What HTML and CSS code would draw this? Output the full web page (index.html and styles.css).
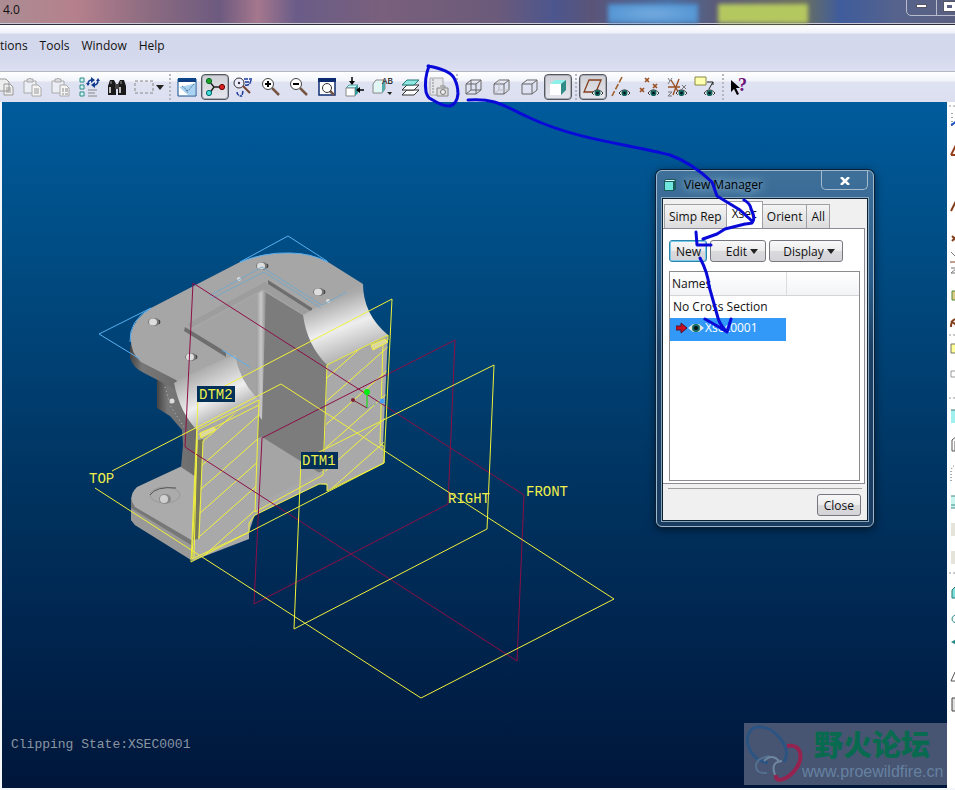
FILE: index.html
```
<!DOCTYPE html>
<html lang="en">
<head>
  <meta charset="UTF-8">
  <meta name="viewport" content="width=device-width, initial-scale=1.0">
  <title>View Manager</title>
  <link rel="stylesheet" href="styles.css">
</head>
<body>
  <!-- shared icon parts -->
  <svg class="defs" width="0" height="0" aria-hidden="true">
    <symbol id="eye" viewBox="0 0 12 8">
      <path d="M0 4Q6-3 12 4Q6 10 0 4z" fill="#fff"/>
      <path d="M0 4Q6-3 12 4M0 4l2 2M12 4l-2 2" fill="none" stroke="#222"/>
      <circle cx="6" cy="4" r="3.4" fill="#17695f"/><circle cx="6" cy="4" r="1.5" fill="#012"/>
    </symbol>
    <symbol id="paste" viewBox="0 0 20 20">
      <path d="M1 4h12v12H1z" fill="#eceef5" stroke="#aaa"/><path d="M4 5V2h2l1-1 1 1h2v3z" fill="#ddd" stroke="#aaa"/>
      <path d="M9 8h6l3 3v8H9z" fill="#f5f5f5" stroke="#aaa"/>
    </symbol>
    <symbol id="cube" viewBox="0 0 20 20">
      <path d="M2 7h10v10H2zM2 7l5-4h10l-5 4M17 3v10l-5 4" fill="none" stroke="#666"/>
    </symbol>
  </svg>

  <header class="titlebar">
    <span class="title">4.0</span>
    <div class="glow blue"></div>
    <div class="glow green"></div>
    <div class="win-buttons">
      <button aria-label="Minimize"><i class="min"></i></button>
      <button aria-label="Maximize"><i class="max"></i></button>
    </div>
  </header>

  <nav class="menubar">
    <a href="#">tions</a>
    <a href="#">Tools</a>
    <a href="#">Window</a>
    <a href="#">Help</a>
  </nav>

  <div class="toolbar">
    <button aria-label="Copy"><svg viewBox="0 0 20 20"><path d="M4 2h7l3 3v9H4zM9 7h6l3 3v8H9z" fill="#eee" stroke="#999"/><path d="M11 11h5M11 13h5M11 15h5" stroke="#999"/></svg></button>
    <button aria-label="Paste"><svg viewBox="0 0 20 20"><use href="#paste"/><path d="M11 12h5M11 14h5M11 16h5" stroke="#999"/></svg></button>
    <button aria-label="Paste special"><svg viewBox="0 0 20 20"><use href="#paste"/><path d="M11 12h2M14 12h3M11 14h2M14 14h3M11 17h2M14 17h3" stroke="#888"/></svg></button>
    <button aria-label="Regenerate"><svg viewBox="0 0 20 20"><path d="M1 1h4v4H1zM1 8h4v4H1zM1 15h4v4H1z" fill="#d5f5f2" stroke="#2a8a88"/><path d="M9 13h9M9 16h7M9 19h9" stroke="#888"/><path d="M9 7q0-4 4-4M19 3q0 5-4 5" fill="none" stroke="#123a8c" stroke-width="1.5"/><path d="M12 0l4 3-4 3zM16 5v6l-4-3zM7 6h4l-2 3zM17 4h4l-2-3z" fill="#123a8c"/></svg></button>
    <button aria-label="Find"><svg viewBox="0 0 20 20"><path d="M3 3h4l2 4v11H1V9zM13 3h4l2 6v9h-8V7z" fill="#1a1a1a"/><path d="M8 7h4v5H8z" fill="#444"/><path d="M3 10v6M13 10v6" stroke="#bbb" stroke-width="2"/><path d="M4 4v3M14 4v3" stroke="#999"/></svg></button>
    <button class="wide" aria-label="Select"><svg viewBox="0 0 20 20"><path d="M1 4h18v12H1z" fill="none" stroke="#888" stroke-dasharray="3 2"/></svg><i class="caret"></i></button>
    <i class="sep"></i>
    <button aria-label="Repaint"><svg viewBox="0 0 20 20"><path d="M1 2h18v17H1z" fill="#fff"/><path d="M2 10l9 8h7V6l-6 2z" fill="#a9d3f2"/><path d="M1 1h18v4H1z" fill="#0d3c80"/><path d="M1 2h18v17H1z" fill="none" stroke="#0d4c90"/><path d="M5 9l6 5 6-7M9 13l2 3" fill="none" stroke="#579" stroke-dasharray="2 1"/></svg></button>
    <button class="pressed" aria-label="Spin center"><svg viewBox="0 0 20 20"><path d="M4 4l5 6h9M9 10l-5 7" fill="none" stroke="#222" stroke-width="1.4"/><circle cx="4" cy="4" r="2.6" fill="#1ea51e" stroke="#063"/><circle cx="17" cy="10" r="2.6" fill="#d22" stroke="#600"/><circle cx="4" cy="16" r="2.6" fill="#4dd" stroke="#066"/></svg></button>
    <button aria-label="Orient mode"><svg viewBox="0 0 20 20"><circle cx="6" cy="6" r="5" fill="#eef" stroke="#333"/><circle cx="6" cy="6" r="1.2" fill="#333"/><path d="M10 9l7 7" stroke="#743" stroke-width="2"/><path d="M11 2h8M12 5h5M12 8q5 1 6-5M4 15q0 4 5 4M10 14l-1 5" fill="none" stroke="#1a3a9c" stroke-dasharray="4 1" stroke-width="1.5"/></svg></button>
    <button aria-label="Zoom in"><svg viewBox="0 0 20 20"><path d="M11 11l7 7" stroke="#754" stroke-width="2.5"/><circle cx="7" cy="7" r="5.5" fill="#fff" stroke="#444"/><path d="M4 7h6M7 4v6" stroke="#000" stroke-width="2"/></svg></button>
    <button aria-label="Zoom out"><svg viewBox="0 0 20 20"><path d="M11 11l7 7" stroke="#754" stroke-width="2.5"/><circle cx="7" cy="7" r="5.5" fill="#fff" stroke="#444"/><path d="M4 7h6" stroke="#000" stroke-width="2"/></svg></button>
    <button aria-label="Refit"><svg viewBox="0 0 20 20"><path d="M2 2h16v16H2z" fill="#fff" stroke="#0d2c70" stroke-width="1.5"/><path d="M1 1h18v4H1z" fill="#0d2c70"/><path d="M12 13l5 5" stroke="#754" stroke-width="2.5"/><circle cx="10" cy="11" r="4.5" fill="#fff" stroke="#333"/></svg></button>
    <button aria-label="Reorient"><svg viewBox="0 0 20 20"><path d="M1 11l3-3h9l-3 3z" fill="#bff" stroke="#599"/><path d="M1 11h9v8H1z" fill="#fff" stroke="#888"/><path d="M10 11l3-3v8l-3 3z" fill="#399"/><path d="M7 0v5M19 13h-4" stroke="#000" stroke-width="1.5"/><path d="M4 4h6L7 8zM15 10v6l-4-3z" fill="#000"/></svg></button>
    <button aria-label="Saved view list"><svg viewBox="0 0 20 20"><path d="M0 7l3-4h9v9l-3 4H0z" fill="#e2f6f6" stroke="#888"/><path d="M9 16V7l3-4v9z" fill="#5aa"/><text x="9" y="7" class="tiny">AB</text><path d="M14 15h5l-2 3z" fill="#222"/></svg></button>
    <button aria-label="Layers"><svg viewBox="0 0 20 20"><path d="M1 18l5-5h12l-5 5z" fill="#fff" stroke="#333"/><path d="M1 13l5-5h12l-5 5z" fill="#fff" stroke="#333"/><path d="M1 8l5-5h12l-5 5z" fill="#8ee8e0" stroke="#277"/></svg></button>
    <button aria-label="View manager"><svg viewBox="0 0 20 20"><path d="M1 1h13v17H1z" fill="#e4e5ea" stroke="#aaa"/><path d="M4 2v15" stroke="#888" stroke-dasharray="2 1"/><path d="M8 11h11v8H8zM11 9h5v2" fill="#ddd" stroke="#888"/><circle cx="14" cy="15" r="2.5" fill="#eee" stroke="#777"/></svg></button>
    <i class="sep"></i>
    <button aria-label="Wireframe"><svg viewBox="0 0 20 20"><use href="#cube"/><path d="M7 3v10h10M7 13l-5 4" fill="none" stroke="#666"/></svg></button>
    <button aria-label="Hidden line"><svg viewBox="0 0 20 20"><use href="#cube"/><path d="M7 3v10h10M7 13l-5 4" fill="none" stroke="#bbb"/></svg></button>
    <button aria-label="No hidden"><svg viewBox="0 0 20 20"><use href="#cube"/></svg></button>
    <button class="pressed" aria-label="Shading"><svg viewBox="0 0 20 20"><path d="M2 7l5-4h11l-5 4z" fill="#8ff0ea"/><path d="M2 7h11v11H2z" fill="#fff"/><path d="M13 7l5-4v10l-5 5z" fill="#2f8c86"/></svg></button>
    <i class="sep"></i>
    <button class="pressed" aria-label="Datum planes"><svg viewBox="0 0 20 20"><path d="M6 3h12l-5 12H1z" fill="none" stroke="#853f1c" stroke-width="1.3"/><use href="#eye" x="9" y="12" width="11" height="8"/></svg></button>
    <button aria-label="Datum axes"><svg viewBox="0 0 20 20"><path d="M11 0L1 19" stroke="#a0602c" stroke-width="1.6" stroke-dasharray="6 2"/><use href="#eye" x="8" y="12" width="11" height="8"/></svg></button>
    <button aria-label="Datum points"><svg viewBox="0 0 20 20"><path d="M6 1l4 4m0-4L6 5M14 7l4 4m0-4l-4 4M1 11l4 4m0-4l-4 4" stroke="#9a4f20" stroke-width="1.6"/><use href="#eye" x="9" y="12" width="11" height="8"/></svg></button>
    <button aria-label="Coordinate systems"><svg viewBox="0 0 20 20"><path d="M1 10h12M6 18L12 2M4 3l8 13" stroke="#9a4f20" stroke-width="1.4"/><path d="M1 1l2 3 2-3M3 4L1 7M15 8l4 4m0-4l-4 4M1 15h4l-4 4h4" fill="none" stroke="#777"/><use href="#eye" x="9" y="12" width="11" height="8"/></svg></button>
    <button aria-label="Annotations"><svg viewBox="0 0 20 20"><path d="M0 0h11v8H0z" fill="#ffffb0" stroke="#884"/><path d="M12 5h6l-4 7M18 5v3" fill="none" stroke="#222"/><use href="#eye" x="9" y="12" width="11" height="8"/></svg></button>
    <i class="sep"></i>
    <button aria-label="Context help"><svg viewBox="0 0 20 20"><path d="M1 3v12l3-3 3 6 2-1-3-6h4z" fill="#000"/><text x="8" y="14" class="help">?</text></svg></button>
  </div>

  <main class="workspace">
    <section class="viewport">
      <svg class="scene" viewBox="2 102 945 686" width="945" height="686">
        <defs>
          <linearGradient id="cylR" x1="345" y1="295" x2="367" y2="357" gradientUnits="userSpaceOnUse">
            <stop offset="0" stop-color="#aaa"/><stop offset=".45" stop-color="#eee"/><stop offset="1" stop-color="#a8a8a8"/>
          </linearGradient>
          <linearGradient id="cylL" x1="205" y1="366" x2="232" y2="420" gradientUnits="userSpaceOnUse">
            <stop offset="0" stop-color="#aaa"/><stop offset=".55" stop-color="#eee"/><stop offset="1" stop-color="#a0a0a0"/>
          </linearGradient>
          <linearGradient id="rib">
            <stop offset="0" stop-color="#999"/><stop offset=".5" stop-color="#c8c8c8"/><stop offset="1" stop-color="#8a8a8a"/>
          </linearGradient>
          <linearGradient id="side">
            <stop offset="0" stop-color="#444"/><stop offset=".25" stop-color="#777"/><stop offset="1" stop-color="#6c6c6c"/>
          </linearGradient>
          <pattern id="hatch" width="26" height="23" patternUnits="userSpaceOnUse">
            <path d="M-1 24L27-1" stroke="#f4f43a"/>
          </pattern>
          <g id="hole">
            <ellipse rx="6" ry="4" fill="#777"/><ellipse cx="-1" rx="4" ry="3.500" fill="#ddd"/><path d="M5-2q2 2 0 4" fill="none" stroke="#333"/>
          </g>
        </defs>

        <!-- base foot -->
        <path d="M131 497v23l4 5 57 35 1-22z" fill="#777"/>
        <path d="M131 508l60 37v15l-56-35-4-5z" fill="#999"/>
        <path d="M137 487l43-20 20-10v84l-7 0-58-34q-8-10 2-20z" fill="#ababab"/>
        <ellipse cx="165" cy="495" rx="15" ry="8" fill="none" stroke="#999"/>
        <path d="M150 495q6-9 26-7" fill="none" stroke="#555"/>
        <ellipse cx="165" cy="499" rx="6" ry="5" fill="#888"/><ellipse cx="164" cy="499" rx="4" ry="4" fill="#d0d0d0"/>

        <!-- outer wall -->
        <path d="M157 376v32l13 8 12 14 1 15-2 22 18 12V380z" fill="url(#side)"/>
        <path d="M130 345v13q3 10 14 15l33 17-1-18z" fill="url(#side)"/>

        <!-- top face -->
        <path d="M131 333q3-14 20-25l89-46q25-10 50-9 20 0 38 9l35 22-57 100-62 75-68-79-35-18q-12-10-10-29z" fill="#a6a6a6"/>

        <!-- pocket -->
        <path d="M190 331l68-37 9-3-2 120-25-16-5-38z" fill="#a3a3a3"/>
        <path d="M187 324l78-42 45 29-4 5-43-27-72 39z" fill="#9d9d9d"/>
        <path d="M265 292l41 25 21 48-2 115-69-40 2-40z" fill="#7c7c7c"/>
        <path d="M257 295q5-6 9-3l-4 128-6-8z" fill="url(#rib)"/>
        <path d="M262 437l64 40-74 40 2-78z" fill="#a5a5a5"/>
        <path d="M268 280l44 28v4l-44-28zM185 327l41 25v5l-42-26z" fill="#6e6e6e"/>

        <!-- rounded saddles -->
        <path d="M303 315q30-18 60-31 0 30 25 51l-61 30q-20-20-24-50z" fill="url(#cylR)"/>
        <path d="M174 383q28-16 61-28 5 27 24 45l-62 30q-17-17-23-47z" fill="url(#cylL)"/>

        <!-- section faces -->
        <path d="M197 430l62-30-4 114-6 18v7l-57 22z" fill="#a9a9a9"/>
        <path d="M327 365l61-30-5 110 1 18-57 28v-6l-7-1-65 31 1-10 68-35z" fill="#a9a9a9"/>
        <path d="M199 432l60-31-4 113-6 18v6l-57 22 6-24z" fill="url(#hatch)"/>
        <path d="M327 365l61-30-5 128-57 28-1-13z" fill="url(#hatch)"/>
        <path d="M198 440l5-1-5 100-5 1z" fill="#77775c"/>
        <g fill="none" stroke="#f0f03c">
          <path d="M197 430l62-30-4 112 68-37 4-110 61-30v5l-5 3-3 101 4 2v17l-57 28v-7l-8 0-64 31-6 8v9l-57 27 5-120zM199 435l60-30M203 441l-4 98M197 440l-3 118"/>
          <path d="M200 433l14-6 2 3-15 8z" fill="#ddd8a0"/>
          <path d="M371 345l14-6 3 3-15 8z" fill="#ddd8a0"/>
        </g>

        <use href="#hole" x="154" y="322"/><use href="#hole" x="191" y="357"/><use href="#hole" x="262" y="266"/><use href="#hole" x="319" y="292"/>
        <circle cx="239" cy="279" r="2" fill="#ddd"/><circle cx="172" cy="401" r="2.500" fill="#ddd"/><circle cx="328" cy="301" r="2" fill="#ddd"/>
        <path d="M165 387l6 20 13 20" fill="none" stroke="#bbb" stroke-dasharray="1 3"/>

        <!-- sketch curves -->
        <g fill="none" stroke="#5ab0f0">
          <path d="M240 262L288 236l39 25M240 262q25-10 50-9 20 0 38 9M151 308L99 334l41 25M151 308q-22 12-21 34"/>
          <path d="M209 296l53-29 60 38 25-13M211 299l53-27 57 36" stroke="#78a8c8"/>
          <path d="M222 350l28 17"/>
        </g>

        <!-- datum planes -->
        <g fill="none" stroke="#8c0f46">
          <path d="M193 283L524 495l-7 166L185 447z"/>
          <path d="M455 340l-7 164-194 100 8-166z"/>
        </g>
        <g fill="none" stroke="#f0f03c">
          <path d="M95 488l326 210 193-99L281 384l-169 87"/>
          <path d="M494 365l-7 164-193 100 7-168z"/>
          <path d="M392 299l-8 164-193 99 7-162z"/>
        </g>

        <!-- spin center -->
        <path d="M367 392v16" stroke="#0d0"/><path d="M353 400l14 8" stroke="#802030"/><path d="M367 408l15-7" stroke="#69b" stroke-dasharray="2 2"/>
        <circle cx="367" cy="392" r="3" fill="#0e1"/><circle cx="353" cy="400" r="2" fill="#802030"/><circle cx="382" cy="401" r="2.500" fill="#4aa0f0"/>

        <path d="M197 386h38v16h-38zM301 452h37v17h-37z" fill="#033058"/>
        <g class="tag">
          <text x="199" y="399">DTM2</text>
          <text x="302" y="465">DTM1</text>
          <text x="89" y="483">TOP</text>
          <text x="448" y="503">RIGHT</text>
          <text x="526" y="496">FRONT</text>
        </g>
      </svg>

      <p class="status">Clipping State:XSEC0001</p>

      <div class="watermark">
        <svg viewBox="0 0 60 62" width="60" height="62">
          <g fill="none">
            <path d="M24 40C8 38 0 20 5 10S26 3 35 14s9 18 5 25" stroke="#2b5482" stroke-width="3"/>
            <path d="M26 33q-14 2-14 10t11 7" stroke="#54708f" stroke-width="2"/>
            <path d="M43 23c15-3 17 13 8 24S31 60 32 52" stroke="#96234f" stroke-width="4"/>
            <path d="M20 38q8-8 15 0M31 52q-5-13 7-14" stroke="#6f86a0" stroke-width="2"/>
          </g>
        </svg>
        <div class="wm-text">
          <strong lang="zh">野火论坛</strong>
          <span>www.proewildfire.cn</span>
        </div>
      </div>

      <div class="dialog" role="dialog" aria-labelledby="dlgTitle">
        <div class="dialog-title">
          <svg viewBox="0 0 12 12" width="12" height="12"><path d="M0 2l2-2h10v10l-2 2H0z" fill="#1c5c5c"/><path d="M1 3h8v8H1z" fill="#6fe6de"/><path d="M1 2l1-1h9l-1 1z" fill="#dff"/></svg>
          <h2 id="dlgTitle">View Manager</h2>
          <button class="close-x" aria-label="Close window"><svg viewBox="0 0 10 8" width="10" height="8"><path d="M1 0l8 8M9 0L1 8" stroke="#fff" stroke-width="2.5"/></svg></button>
        </div>
        <div class="dialog-body">
          <div class="tabs" role="tablist">
            <button role="tab">Simp Rep</button>
            <button role="tab" class="active" aria-selected="true">Xsec</button>
            <button role="tab">Orient</button>
            <button role="tab">All</button>
          </div>
          <div class="panel">
            <div class="actions">
              <button class="btn new">New</button>
              <button class="btn edit">Edit<i class="caret"></i></button>
              <button class="btn display">Display<i class="caret"></i></button>
            </div>
            <div class="list">
              <table>
                <thead><tr><th>Names</th><th></th></tr></thead>
                <tbody>
                  <tr><td>No Cross Section</td><td></td></tr>
                  <tr class="selected">
                    <td>
                      <svg viewBox="0 0 28 12" width="28" height="12"><path d="M0 4h5V1l6 5-6 5V8H0z" fill="#c81020" stroke="#501030"/><path d="M12 6l5-4h6l5 4-5 4h-6z" fill="#dfe8e4"/><circle cx="20" cy="6" r="4" fill="#17695f"/><circle cx="20" cy="6" r="2" fill="#012"/></svg><span>Xsec0001</span>
                    </td>
                    <td></td>
                  </tr>
                </tbody>
              </table>
            </div>
          </div>
          <div class="footer"><button class="btn">Close</button></div>
        </div>
      </div>
    </section>

    <aside class="sidebar">
      <i class="hsep"></i>
      <button aria-label="Style"><svg viewBox="0 0 28 28"><path d="M4 18q5-2 8-8" fill="none" stroke="#25c" stroke-width="2"/><path d="M5 6v16" stroke="#444" stroke-dasharray="1 3"/></svg></button>
      <button aria-label="Plane"><svg viewBox="0 0 28 28"><path d="M4 20l6-12h10M4 20h12" fill="none" stroke="#953f1c" stroke-width="2"/></svg></button>
      <button aria-label="Axis"></button>
      <button aria-label="Curve"><svg viewBox="0 0 28 28"><path d="M4 20l4-8 4 4" fill="none" stroke="#853f1c" stroke-width="2"/></svg></button>
      <button aria-label="Point"><svg viewBox="0 0 28 28"><path d="M5 17l5 5m0-5l-5 5" stroke="#853f1c" stroke-width="2"/></svg></button>
      <button aria-label="Coordinate system"><svg viewBox="0 0 28 28"><path d="M4 5l4 4 3-4M4 21h6l-6 5h6" fill="none" stroke="#777"/><path d="M3 15h20" stroke="#853f1c"/></svg></button>
      <button aria-label="Analysis"><svg viewBox="0 0 28 28"><path d="M5 16h10v9H5z" fill="#dc8" stroke="#583"/></svg></button>
      <button aria-label="Sketch"><svg viewBox="0 0 28 28"><path d="M4 24q0-8 6-8M4 18l8 6" fill="none" stroke="#853f1c" stroke-width="2"/></svg></button>
      <i class="hsep"></i>
      <button aria-label="Annotation"><svg viewBox="0 0 28 28"><path d="M4 6h16v9H4z" fill="#ffff9a" stroke="#776"/></svg></button>
      <button aria-label="Propagate"><svg viewBox="0 0 28 28"><path d="M4 5h16v6H4z" fill="#fff" stroke="#999"/></svg></button>
      <i class="hsep"></i>
      <button aria-label="Extrude"><svg viewBox="0 0 28 28"><path d="M4 9h18v13H4z" fill="#9ff0ee"/><path d="M4 9h18" stroke="#477"/></svg></button>
      <button aria-label="Shell"><svg viewBox="0 0 28 28"><path d="M5 22V11l5-4h9v15zM8 22V12h9" fill="none" stroke="#555"/></svg></button>
      <button aria-label="Round"><svg viewBox="0 0 28 28"><path d="M4 24V14q1-7 9-7" fill="none" stroke="#555" stroke-dasharray="1 2"/></svg></button>
      <button aria-label="Rib"><svg viewBox="0 0 28 28"><path d="M4 11h18v12H4z" fill="#c9f5f0"/><path d="M4 11h18M4 20h18M4 23h18" stroke="#488"/></svg></button>
      <button aria-label="Draft"><svg viewBox="0 0 28 28"><path d="M4 10h18v13H4z" fill="#e4e4da"/></svg></button>
      <button aria-label="Hole"><svg viewBox="0 0 28 28"><path d="M4 10h18v13H4z" fill="#e4e4da"/></svg></button>
      <i class="hsep"></i>
      <button aria-label="Sweep"><svg viewBox="0 0 28 28"><path d="M5 14l3-3h14v11H5z" fill="#7fe0dc" stroke="#277"/></svg></button>
      <button aria-label="Revolve"><svg viewBox="0 0 28 28"><path d="M12 10q-7 1-7 5t7 4" fill="none" stroke="#288"/></svg></button>
      <button aria-label="Blend"><svg viewBox="0 0 28 28"><path d="M4 10l7-4v8z" fill="#2a8a88"/></svg></button>
      <button aria-label="Boundary"><svg viewBox="0 0 28 28"><path d="M4 21l4-9 6 5-4 4z" fill="none" stroke="#555"/></svg></button>
      <button aria-label="Style surface"><svg viewBox="0 0 28 28"><path d="M5 10h12v13H5z" fill="#ddd" stroke="#444"/></svg></button>
    </aside>
  </main>

  <!-- pen marks over the whole window -->
  <svg class="pen" viewBox="0 0 955 790" width="955" height="790" aria-hidden="true">
    <path d="M429 66q-5 13-3 26 2 6 5 7 13 8 19 7 7-2 8-12 0-9-4-16-4-8-26-12"/>
    <path d="M468 100c28-2 36 6 62 18 50 23 100 26 140 37q22 8 42 27l5 14 23 14 12 11M744 200q6 3 7 9 5 10 1 14-6 1-7 1l-20 5-8 5-14 5M696 232l1 13h14M700 258q8 15 9 28 5 18 9 32 2 7 9 14M705 319l14 8 8 5 4-13"/>
  </svg>
</body>
</html>
```
FILE: styles.css
```
* {
  box-sizing: border-box;
}

body {
  margin: 0;
  height: 100vh;
  display: flex;
  flex-direction: column;
  position: relative;
  overflow: hidden;
  background: #f4f8fc;
  font-family: "Open Sans", "Noto Sans", sans-serif;
  font-size: 12px;
  color: #111;
}

button {
  font: inherit;
  color: inherit;
  margin: 0;
  padding: 0;
  border: none;
  background: none;
}

.defs {
  position: absolute;
}

/* title bar */
.titlebar {
  flex: none;
  height: 25px;
  position: relative;
  background: linear-gradient(90deg, #ab8d93 0, #b5808c 8%, #8a6a80 16%, #6d5a80 23%, #a5778d 27%, #6a5c88 31%, #79607c 40%, #6b5a7a 52%, #4c568e 58%, #5a5478 62%, #4a6da0 70%, #5b5b78 75%, #6a7060 84%, #3f5c9c 88%, #56638c 94%, #5a5f80 100%);
  border-bottom: 1px solid #2c2c3c;
  box-shadow: inset 0 -1px 0 #c9c9d8;
}

.title {
  display: block;
  padding: 1px 3px;
}

.glow {
  position: absolute;
  top: 4px;
  height: 19px;
  width: 90px;
  filter: blur(2px);
}

.glow.blue {
  left: 608px;
  background: radial-gradient(#74aade, #4a8fd0);
}

.glow.green {
  left: 718px;
  background: #b4c860;
}

.win-buttons {
  position: absolute;
  top: -4px;
  right: -20px;
  display: flex;
  border: 1px solid #b8bccc;
  border-radius: 0 0 5px 5px;
}

.win-buttons button {
  width: 29px;
  height: 18px;
  display: grid;
  place-items: center;
}

.win-buttons button + button {
  border-left: 1px solid #b8bccc;
  width: 38px;
  justify-items: start;
  padding-left: 7px;
}

.min {
  width: 11px;
  height: 4px;
  background: #fff;
  border: 1px solid #556;
}

.max {
  width: 11px;
  height: 9px;
  border: 3px solid #fff;
  outline: 1px solid #556;
}

/* menu */
.menubar {
  flex: none;
  height: 46px;
  display: flex;
  gap: 12px;
  padding-top: 12px;
  line-height: 18px;
  background: linear-gradient(#fff 0, #eef1f9 8px, #d4d8ec 9px, #d4d8ec 30px, #dde0f2 100%);
}

.menubar a {
  color: #111;
  text-decoration: none;
}

/* toolbar */
.toolbar {
  flex: none;
  height: 31px;
  display: flex;
  align-items: center;
  margin-left: -9px;
  border-top: 1px solid #b4b6c2;
  background: linear-gradient(#fff 0, #f2f4fa 9px, #dfe2f1 10px, #dcdff0 100%);
}

.toolbar button {
  flex: none;
  width: 28px;
  height: 26px;
  display: flex;
  align-items: center;
  justify-content: center;
}

.toolbar svg {
  flex: none;
  width: 20px;
  height: 20px;
  overflow: visible;
}

.toolbar .wide {
  width: 35px;
  gap: 2px;
}

.toolbar .pressed {
  border: 1px solid #55585f;
  border-radius: 4px;
  background: linear-gradient(#cfd0d6, #e6e7ee);
  box-shadow: inset 0 0 0 1px #a9abb4;
}

.sep {
  flex: none;
  width: 7px;
  height: 26px;
  background: repeating-linear-gradient(#b4b6c0 0 2px, transparent 2px 4px) center / 2px 100% no-repeat;
}

.caret {
  display: inline-block;
  border: 4px solid transparent;
  border-top: 5px solid #222;
  border-bottom: 0;
}

.tiny {
  font: 9px "Liberation Mono", monospace;
}

.help {
  font: bold 18px "Liberation Serif", serif;
  fill: #6d1078;
}

/* work area */
.workspace {
  flex: 1;
  min-height: 0;
  display: flex;
  padding: 0 0 2px 2px;
}

.viewport {
  flex: 1;
  min-width: 0;
  position: relative;
  overflow: hidden;
  background: linear-gradient(#005b9c 0, #004a80 25%, #003461 55%, #00234c 80%, #00163a 100%);
}

.scene {
  position: absolute;
  top: 0;
  left: 0;
}

.tag {
  font: 14px "Liberation Mono", monospace;
  fill: #f0f04c;
}

.status {
  position: absolute;
  left: 9px;
  bottom: 35px;
  margin: 0;
  font: 13px/16px "Liberation Mono", monospace;
  color: #8b95a2;
}

.watermark {
  position: absolute;
  right: 0;
  bottom: 3px;
  width: 203px;
  height: 62px;
  display: flex;
  background: #475573;
}

.watermark svg {
  flex: none;
}

.wm-text {
  display: flex;
  flex-direction: column;
  margin-left: -2px;
}

.wm-text strong {
  font: 900 29px/40px "Noto Sans CJK SC", sans-serif;
  color: #086a4f;
  padding-left: 12px;
}

.wm-text span {
  font: 16px/18px "Liberation Sans", sans-serif;
  color: #6681a0;
}

.sidebar {
  flex: none;
  width: 8px;
  overflow: hidden;
  background: #fff;
}

.sidebar button {
  display: block;
  width: 28px;
  height: 28px;
}

.sidebar svg {
  display: block;
  width: 28px;
  height: 28px;
}

.hsep {
  display: block;
  height: 7px;
  background: repeating-linear-gradient(90deg, #ccc 0 2px, transparent 2px 4px) 2px 3px / 100% 2px no-repeat;
}

.hsep:first-child {
  height: 5px;
}

/* dialog */
.dialog {
  position: absolute;
  top: 68px;
  right: 73px;
  width: 218px;
  padding: 0 5px 5px;
  border: 1px solid #9db8cc;
  border-radius: 6px;
  background: linear-gradient(#3f709a 0, #2b5e8c 30%, #1c4064 50%, #1a3c60 100%);
  box-shadow: 0 0 0 1px #0a2038, 0 2px 10px rgba(0, 0, 0, 0.6);
}

.dialog-title {
  height: 27px;
  display: flex;
  align-items: center;
  gap: 8px;
  padding-left: 2px;
}

.dialog-title h2 {
  flex: 1;
  margin: 0;
  font-size: 12px;
  font-weight: 400;
  color: #000;
  text-shadow: 0 0 8px #9cc0da, 0 0 12px #9cc0da;
}

.close-x {
  align-self: flex-start;
  width: 47px;
  height: 19px;
  border: 1px solid #a4bccd;
  border-top: 0;
  border-radius: 0 0 5px 5px;
}

.dialog-body {
  border: 1px solid #0c2034;
  outline: 1px solid #8aa6bc;
  background: #f0f0f0;
}

.tabs {
  height: 29px;
  display: flex;
  align-items: flex-end;
  padding: 0 1px;
}

.tabs button {
  height: 24px;
  padding: 0 4px;
  border: 1px solid #a0a0a4;
  border-bottom: 0;
  margin-right: -1px;
  background: linear-gradient(#f4f4f4, #dcdcde);
}

.tabs .active {
  height: 27px;
  padding: 0 5px 3px;
  background: #fff;
}

.panel {
  margin-right: 2px;
  padding: 11px 4px 2px 6px;
  background: #fff;
  border: 1px solid #8c8c96;
  border-left: 0;
}

.actions {
  display: flex;
  gap: 3px;
}

.btn {
  height: 22px;
  padding: 0 6px;
  border: 1px solid #77777f;
  border-radius: 3px;
  background: linear-gradient(#f8f8f8 0, #ececec 50%, #dadadd 51%, #d4d4d8 100%);
}

.btn.new {
  width: 38px;
  border-color: #2b86ac;
  box-shadow: inset 0 0 0 1px #7cc8e8;
}

.btn .caret {
  margin-left: 3px;
  vertical-align: 2px;
}

.btn.edit {
  width: 56px;
  padding-left: 14px;
}

.btn.display {
  width: 74px;
  padding-left: 12px;
}

.list {
  margin-top: 9px;
  height: 210px;
  border: 1px solid #8c8c90;
}

.list table {
  width: 100%;
  border-collapse: collapse;
  table-layout: fixed;
}

.list th {
  height: 23px;
  padding: 0 2px;
  text-align: left;
  font-weight: 400;
  background: linear-gradient(#fff, #f2f3f5);
  border-bottom: 1px solid #d5d5d8;
}

.list th:first-child {
  width: 116px;
  border-right: 1px solid #ddd;
}

.list td {
  height: 23px;
  padding: 0 3px;
  line-height: 16px;
  white-space: nowrap;
}

.list .selected td {
  padding: 0 6px 4px;
}

.list .selected td:first-child {
  background: #3399f8;
  color: #fff;
}

.selected svg {
  vertical-align: -2px;
  margin-right: 1px;
}

.footer {
  margin: 4px 5px 0;
  padding: 5px 1px 4px;
  border-top: 1px solid #a0a0a0;
  text-align: right;
}

/* pen marks */
.pen {
  position: absolute;
  top: 0;
  left: 0;
  pointer-events: none;
}

.pen path {
  fill: none;
  stroke: #0a0ad8;
  stroke-width: 3;
  stroke-linecap: round;
  stroke-linejoin: round;
}
```
